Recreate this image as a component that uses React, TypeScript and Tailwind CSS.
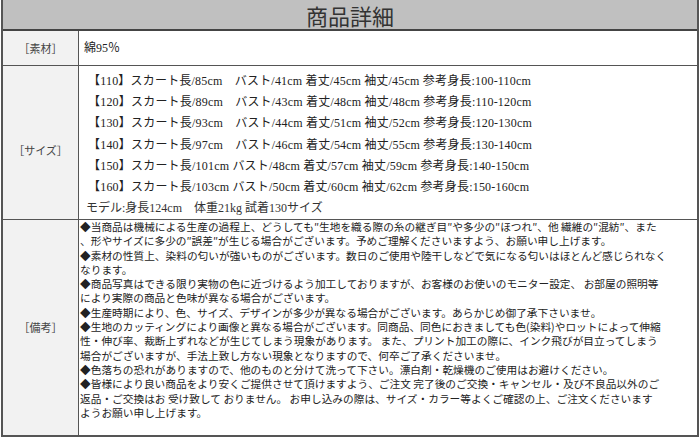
import React from "react";

const sizeRows = [
  "【110】スカート長/85cm　バスト/41cm 着丈/45cm 袖丈/45cm 参考身長:100-110cm",
  "【120】スカート長/89cm　バスト/43cm 着丈/48cm 袖丈/48cm 参考身長:110-120cm",
  "【130】スカート長/93cm　バスト/44cm 着丈/51cm 袖丈/52cm 参考身長:120-130cm",
  "【140】スカート長/97cm　バスト/46cm 着丈/54cm 袖丈/55cm 参考身長:130-140cm",
  "【150】スカート長/101cm バスト/48cm 着丈/57cm 袖丈/59cm 参考身長:140-150cm",
  "【160】スカート長/103cm バスト/50cm 着丈/60cm 袖丈/62cm 参考身長:150-160cm",
];

const notes = [
  "◆当商品は機械による生産の過程上、どうしても″生地を織る際の糸の継ぎ目″や多少の″ほつれ″、他 繊維の″混紡″、また",
  "、形やサイズに多少の″誤差″が生じる場合がございます。予めご理解くださいますよう、お願い申し上げます。",
  "◆素材の性質上、染料の匂いが強いものがございます。数日のご使用や陸干しなどで気になる匂いはほとんど感じられなく",
  "なります。",
  "◆商品写真はできる限り実物の色に近づけるよう加工しておりますが、お客様のお使いのモニター設定、 お部屋の照明等",
  "により実際の商品と色味が異なる場合がございます。",
  "◆生産時期により、色、サイズ、デザインが多少が異なる場合がございます。あらかじめ御了承下さいませ。",
  "◆生地のカッティングにより画像と異なる場合がございます。同商品、同色におきましても色(染料)やロットによって伸縮",
  "性・伸び率、裁断上ずれなどが生じてしまう現象があります。 また、プリント加工の際に、インク飛びが目立ってしまう",
  "場合がございますが、手法上致し方ない現象となりますので、何卒ご了承くださいませ。",
  "◆色落ちの恐れがありますので、他のものと分けて洗って下さい。漂白剤・乾燥機のご使用はお避けください。",
  "◆皆様により良い商品をより安くご提供させて頂けますよう、ご注文 完了後のご交換・キャンセル・及び不良品以外のご",
  "返品・ご交換はお 受け致して おりません。 お申し込みの際は、サイズ・カラー等よくご確認の上、ご注文くださいます",
  "ようお願い申し上げます。",
];

const sans = "font-['Noto_Sans_CJK_JP',sans-serif]";
const serif = "font-['Liberation_Serif','Noto_Sans_CJK_JP',serif]";

function Label({ text, className = "" }: { text: string; className?: string }) {
  return (
    <div
      className={
        "flex w-[76px] shrink-0 items-center justify-center border-r border-[#555] bg-[#f2f2f2] text-[11px] text-[#444] " +
        sans +
        " " +
        className
      }
    >
      {text}
    </div>
  );
}

export default function App() {
  return (
    <div className="h-[439px] w-[700px] bg-white">
      <div className="ml-px flex h-[437px] w-[698px] flex-col border-x-2 border-b-2 border-[#555]">

        <div
          className={
            "flex h-[31px] shrink-0 items-center justify-center border-b-2 border-[#444] bg-[#c0c0c0] text-[22px] leading-[26px] text-[#333] " +
            sans
          }
        >
          商品詳細
        </div>

        <div className="flex h-[35px] shrink-0 border-b border-[#555]">
          <Label text="［素材］" />
          <div className={"flex items-center pl-[5px] text-[12px] text-[#222] " + serif}>
            綿95％
          </div>
        </div>

        <div className="flex h-[154px] shrink-0 border-b border-[#555]">
          <Label text="［サイズ］" className="pt-[16px]" />
          <div className={"flex flex-col pt-[5px] pl-[9px] text-[12px] leading-[21.2px] text-[#222] " + serif}>
            {sizeRows.map((row) => (
              <div key={row} className="whitespace-pre tracking-[0.2px]">
                {row}
              </div>
            ))}
            <div className="-ml-[2px] whitespace-pre leading-[20px] text-[#333]">
              モデル:身長124cm　体重21kg 試着130サイズ
            </div>
          </div>
        </div>

        <div className="flex min-h-0 flex-1">
          <Label text="［備考］" />
          <div className={"flex flex-col pl-[1px] text-[10.7px] leading-[14.3px] text-[#222] " + sans}>
            {notes.map((line, i) => (
              <div key={i} className="whitespace-pre">
                {line}
              </div>
            ))}
          </div>
        </div>

      </div>
    </div>
  );
}
